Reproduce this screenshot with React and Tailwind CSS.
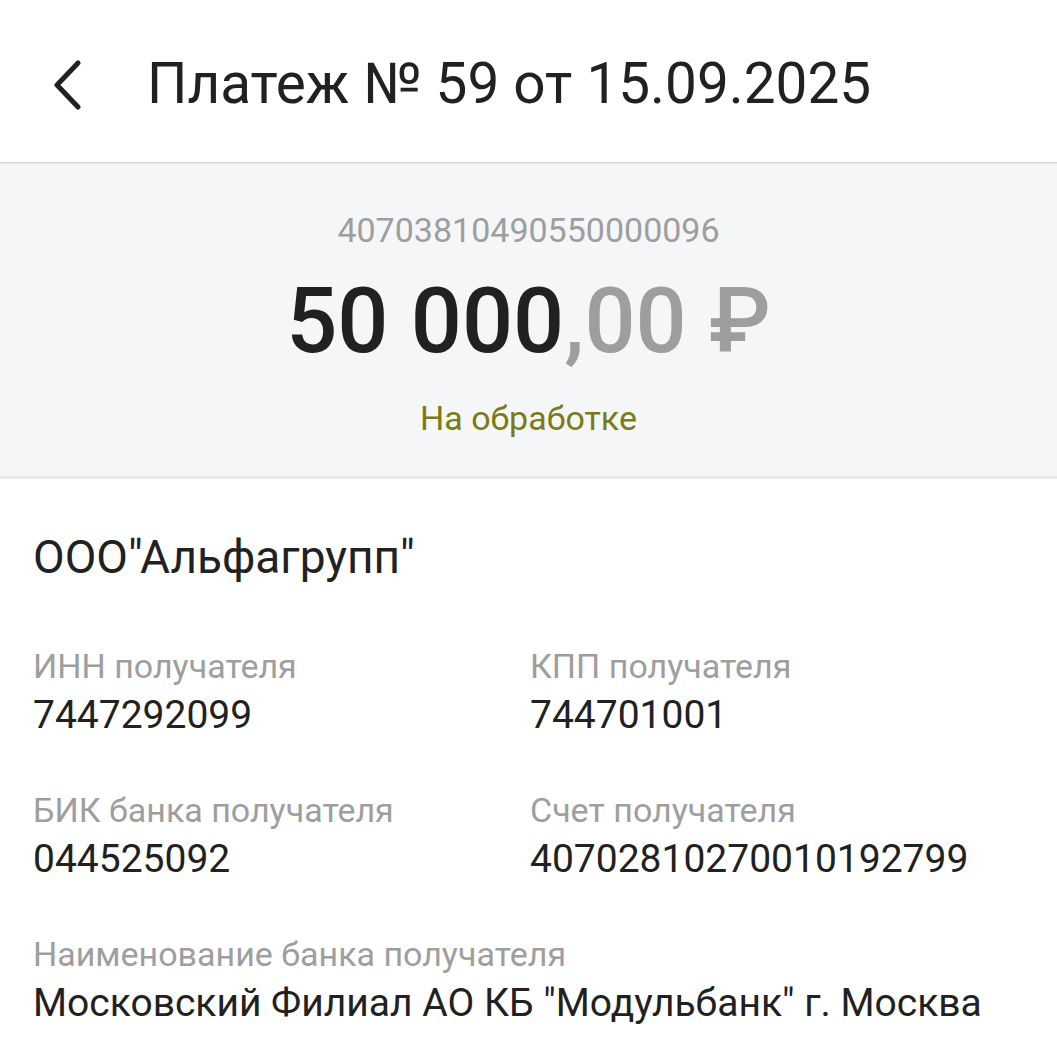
const Field = ({ label, value }) => (
  <div className="flex flex-col">
    <span className="text-[34px] leading-[44px] text-[#9e9e9e]">{label}</span>
    <span className="text-[39px] leading-[54px] text-[#212121]">{value}</span>
  </div>
);

export default function App() {
  return (
    <div className="min-h-screen bg-white font-['Roboto',sans-serif] text-[#212121]">
      <header className="flex items-center h-[162px] pt-[7px] px-[52px] gap-[63px]">
        <svg width="32" height="50" viewBox="0 0 32 50" fill="none" className="shrink-0">
          <path d="M26 3 L5 25 L26 47" stroke="#212121" strokeWidth="5" strokeLinecap="round" strokeLinejoin="round" />
        </svg>
        <h1 className="text-[56.7px] leading-none text-[#212121]">Платеж № 59 от 15.09.2025</h1>
      </header>

      <section className="bg-[#f5f6f8] border-t border-[#d2d3d5] shadow-[inset_0_3px_3px_-2px_rgba(0,0,0,0.08)] flex flex-col items-center pt-[47px] pb-[38px] border-b-[3px] border-b-[#e9eaec]">
        <div className="text-[34px] leading-[40px] text-[#9e9e9e]">40703810490550000096</div>
        <div className="text-[90px] leading-[110px] font-medium mt-[17px]">
          <span className="text-[#212121]">50 000</span>
          <span className="text-[#9e9e9e]">,00 ₽</span>
        </div>
        <div className="text-[34px] leading-[40px] text-[#7b7b16] mt-[21px]">На обработке</div>
      </section>

      <div className="px-[33px] pt-[50px]">
        <div className="text-[46px] leading-[56px]">ООО"Альфагрупп"</div>
        <div className="grid grid-cols-[497px_1fr] gap-y-[46px] mt-[59px]">
          <Field label="ИНН получателя" value="7447292099" />
          <Field label="КПП получателя" value="744701001" />
          <Field label="БИК банка получателя" value="044525092" />
          <Field label="Счет получателя" value="40702810270010192799" />
          <div className="col-span-2">
            <Field label="Наименование банка получателя" value='Московский Филиал АО КБ "Модульбанк" г. Москва' />
          </div>
        </div>
      </div>
    </div>
  );
}
